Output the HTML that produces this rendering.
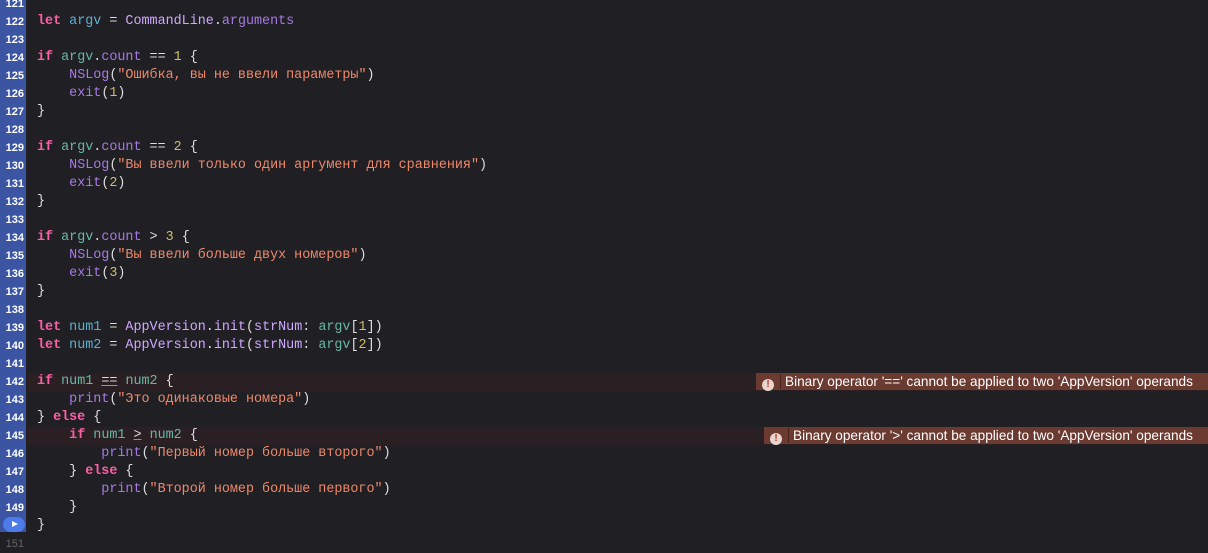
<!DOCTYPE html>
<html><head><meta charset="utf-8"><style>
body{margin:0;width:1208px;height:544px;background:#1f1f24;overflow:hidden;position:relative;font-family:"Liberation Mono",monospace;}
.g{position:absolute;left:0;top:0;width:26px;height:532px;background:#3b55a3;}
.ln{position:absolute;left:0;width:24px;text-align:right;font:bold 11px "Liberation Sans",sans-serif;color:#fff;height:18px;line-height:18px;}
.c{position:absolute;left:37px;font-size:13.4px;line-height:18px;height:18px;color:#dfdfe0;white-space:pre;}
.k{color:#fc5fa3;font-weight:bold}.v{color:#67b7a4}.d{color:#5db0cf}.p{color:#a879e6}.t{color:#d0a8ff}.s{color:#f0896a}.n{color:#d0bf69}
.hl{position:absolute;left:28px;right:0;height:18px;background:#2a2024;}
.err{position:absolute;right:0;height:17px;background:#6b3a30;color:#fff;font:13.6px "Liberation Sans",sans-serif;line-height:17px;white-space:nowrap;}
.err i{display:inline-block;width:12px;height:12px;border-radius:50%;background:#e8d5cf;color:#b03a28;font:bold 10px/12px "Liberation Sans",sans-serif;text-align:center;font-style:normal;margin:0 6px 0 6px;vertical-align:-1px}
.err b{font-weight:normal;border-left:1px solid #4a2019;padding:0 8px 0 4px;}
.u{text-decoration:underline;text-decoration-color:#fc6a5d}
</style></head><body>
<div class="g"></div>
<div class="hl" style="top:373px"></div>
<div class="hl" style="top:427px"></div>
<div class="err" style="top:373px;left:756px"><i>!</i><b>Binary operator '==' cannot be applied to two 'AppVersion' operands</b></div>
<div class="err" style="top:427px;left:764px"><i>!</i><b>Binary operator '>' cannot be applied to two 'AppVersion' operands</b></div>
<div class="ln" style="top:-5px">121</div><div class="ln" style="top:13px">122</div><div class="ln" style="top:31px">123</div><div class="ln" style="top:49px">124</div><div class="ln" style="top:67px">125</div><div class="ln" style="top:85px">126</div><div class="ln" style="top:103px">127</div><div class="ln" style="top:121px">128</div><div class="ln" style="top:139px">129</div><div class="ln" style="top:157px">130</div><div class="ln" style="top:175px">131</div><div class="ln" style="top:193px">132</div><div class="ln" style="top:211px">133</div><div class="ln" style="top:229px">134</div><div class="ln" style="top:247px">135</div><div class="ln" style="top:265px">136</div><div class="ln" style="top:283px">137</div><div class="ln" style="top:301px">138</div><div class="ln" style="top:319px">139</div><div class="ln" style="top:337px">140</div><div class="ln" style="top:355px">141</div><div class="ln" style="top:373px">142</div><div class="ln" style="top:391px">143</div><div class="ln" style="top:409px">144</div><div class="ln" style="top:427px">145</div><div class="ln" style="top:445px">146</div><div class="ln" style="top:463px">147</div><div class="ln" style="top:481px">148</div><div class="ln" style="top:499px">149</div>
<div style="position:absolute;left:3px;top:517px;width:22px;height:15px;border-radius:8px;background:#4d7be8;"><div style="position:absolute;left:9px;top:4px;border-left:6px solid #fff;border-top:3.5px solid transparent;border-bottom:3.5px solid transparent"></div></div>
<div class="ln" style="top:535px;color:#666;font-weight:normal">151</div>
<div class="c" style="top:13px"><span class="k">let</span> <span class="d">argv</span> = <span class="t">CommandLine</span>.<span class="p">arguments</span></div>
<div class="c" style="top:49px"><span class="k">if</span> <span class="v">argv</span>.<span class="p">count</span> == <span class="n">1</span> {</div>
<div class="c" style="top:67px">    <span class="p">NSLog</span>(<span class="s">"Ошибка, вы не ввели параметры"</span>)</div>
<div class="c" style="top:85px">    <span class="p">exit</span>(<span class="n">1</span>)</div>
<div class="c" style="top:103px">}</div>
<div class="c" style="top:139px"><span class="k">if</span> <span class="v">argv</span>.<span class="p">count</span> == <span class="n">2</span> {</div>
<div class="c" style="top:157px">    <span class="p">NSLog</span>(<span class="s">"Вы ввели только один аргумент для сравнения"</span>)</div>
<div class="c" style="top:175px">    <span class="p">exit</span>(<span class="n">2</span>)</div>
<div class="c" style="top:193px">}</div>
<div class="c" style="top:229px"><span class="k">if</span> <span class="v">argv</span>.<span class="p">count</span> &gt; <span class="n">3</span> {</div>
<div class="c" style="top:247px">    <span class="p">NSLog</span>(<span class="s">"Вы ввели больше двух номеров"</span>)</div>
<div class="c" style="top:265px">    <span class="p">exit</span>(<span class="n">3</span>)</div>
<div class="c" style="top:283px">}</div>
<div class="c" style="top:319px"><span class="k">let</span> <span class="d">num1</span> = <span class="t">AppVersion</span>.<span class="t">init</span>(<span class="t">strNum</span>: <span class="v">argv</span>[<span class="n">1</span>])</div>
<div class="c" style="top:337px"><span class="k">let</span> <span class="d">num2</span> = <span class="t">AppVersion</span>.<span class="t">init</span>(<span class="t">strNum</span>: <span class="v">argv</span>[<span class="n">2</span>])</div>
<div class="c" style="top:373px"><span class="k">if</span> <span class="v">num1</span> <span class="u">==</span> <span class="v">num2</span> {</div>
<div class="c" style="top:391px">    <span class="p">print</span>(<span class="s">"Это одинаковые номера"</span>)</div>
<div class="c" style="top:409px">} <span class="k">else</span> {</div>
<div class="c" style="top:427px">    <span class="k">if</span> <span class="v">num1</span> <span class="u">&gt;</span> <span class="v">num2</span> {</div>
<div class="c" style="top:445px">        <span class="p">print</span>(<span class="s">"Первый номер больше второго"</span>)</div>
<div class="c" style="top:463px">    } <span class="k">else</span> {</div>
<div class="c" style="top:481px">        <span class="p">print</span>(<span class="s">"Второй номер больше первого"</span>)</div>
<div class="c" style="top:499px">    }</div>
<div class="c" style="top:517px">}</div>
</body></html>
